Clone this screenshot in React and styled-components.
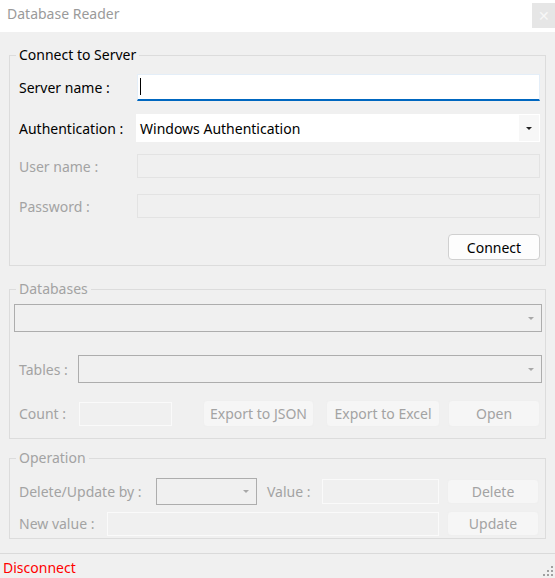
import React from 'react';
import styled, { createGlobalStyle } from 'styled-components';

const GlobalStyle = createGlobalStyle`
  html, body {
    margin: 0;
    padding: 0;
    background: #f0f0f0;
    font-family: 'Noto Sans', 'Open Sans', sans-serif;
    font-size: 14px;
    overflow: hidden;
  }
`;

const Window = styled.div`
  width: 555px;
  height: 578px;
  display: flex;
  flex-direction: column;
  background: #f0f0f0;
`;

const TitleBar = styled.div`
  height: 32px;
  background: #ffffff;
  display: flex;
  align-items: flex-start;
  justify-content: space-between;
  flex-shrink: 0;
`;

const Title = styled.div`
  color: #9a9a9a;
  font-size: 14px;
  line-height: 28px;
  padding-left: 7px;
`;

const CloseBox = styled.div`
  margin-top: 3px;
  width: 23px;
  height: 25px;
  background: #e6e6e6;
  color: #f7f7f7;
  font-size: 14px;
  display: flex;
  align-items: center;
  justify-content: center;
`;

const Group = styled.fieldset`
  margin: ${p => p.$top}px 9px 0 9px;
  padding: 0 0 ${p => p.$bottom}px 0;
  border: 1px solid #dcdcdc;
  min-width: 0;
`;

const Legend = styled.legend`
  margin-left: 6px;
  padding: 0 3px;
  line-height: 20px;
  color: ${p => (p.$disabled ? '#a3a3a3' : '#000')};
`;

const Row = styled.div`
  display: flex;
  align-items: center;
  height: ${p => p.$h}px;
  margin-top: ${p => p.$top}px;
  padding: 0 ${p => p.$pr ?? 5}px 0 ${p => p.$pl ?? 9}px;
`;

const Label = styled.div`
  width: ${p => p.$w}px;
  flex-shrink: 0;
  white-space: nowrap;
  color: ${p => (p.$disabled ? '#a3a3a3' : '#000')};
`;

const TextBox = styled.div`
  box-sizing: border-box;
  height: 100%;
  flex: ${p => (p.$w ? 'none' : '1')};
  width: ${p => (p.$w ? `${p.$w}px` : 'auto')};
  background: ${p => (p.$active ? '#fff' : '#f0f0f0')};
  border: 1px solid ${p => p.$border || '#e6e6e6'};
  display: flex;
  align-items: center;
  padding-left: 2px;
`;

const ActiveBox = styled(TextBox)`
  border-color: #e4eef8;
  border-bottom: 2px solid #0067c0;
`;

const Caret = styled.span`
  width: 1px;
  height: 17px;
  background: #000;
  margin-bottom: 2px;
`;

const Combo = styled.div`
  box-sizing: border-box;
  height: 100%;
  flex: ${p => (p.$w ? 'none' : '1')};
  width: ${p => (p.$w ? `${p.$w}px` : 'auto')};
  display: flex;
  align-items: center;
  background: ${p => (p.$active ? '#fff' : '#f0f0f0')};
  border: 1px solid ${p => (p.$active ? '#fff' : '#adadad')};
`;

const ComboText = styled.div`
  flex: 1;
  padding-left: 3px;
  color: #000;
`;

const ArrowBox = styled.div`
  width: 20px;
  height: 100%;
  display: flex;
  align-items: center;
  justify-content: center;
  background: ${p => (p.$active ? '#f7f7f7' : 'transparent')};
  &::after {
    content: '';
    border-left: 3px solid transparent;
    border-right: 3px solid transparent;
    border-top: 3px solid ${p => (p.$active ? '#222' : '#a8a8a8')};
  }
`;

const Button = styled.div`
  box-sizing: border-box;
  height: 100%;
  width: ${p => p.$w}px;
  flex-shrink: 0;
  margin-left: ${p => p.$ml || 0}px;
  border-radius: 4px;
  display: flex;
  align-items: center;
  justify-content: center;
  white-space: nowrap;
  background: ${p => (p.$disabled ? '#f6f6f6' : '#fdfdfd')};
  border: 1px solid ${p => (p.$disabled ? '#efefef' : '#d0d0d0')};
  color: ${p => (p.$disabled ? '#a3a3a3' : '#000')};
`;

const Spacer = styled.div`
  flex: 1;
`;

const Separator = styled.div`
  margin-top: 14px;
  height: 1px;
  background: #dadada;
`;

const StatusBar = styled.div`
  flex: 1;
  display: flex;
  align-items: center;
  justify-content: space-between;
  padding-left: 3px;
`;

const StatusText = styled.div`
  color: #ff0000;
  margin-top: 2px;
`;

const Grip = styled.svg`
  align-self: flex-end;
  margin: 0 1px 1px 0;
`;

export default function App() {
  return (
    <Window>
      <GlobalStyle />
      <TitleBar>
        <Title>Database Reader</Title>
        <CloseBox>✕</CloseBox>
      </TitleBar>

      <Group $top={13} $bottom={5}>
        <Legend>Connect to Server</Legend>
        <Row $h={27} $top={9}>
          <Label $w={118}>Server name :</Label>
          <ActiveBox $active>
            <Caret />
          </ActiveBox>
        </Row>
        <Row $h={28} $top={13}>
          <Label $w={117}>Authentication :</Label>
          <Combo $active>
            <ComboText>Windows Authentication</ComboText>
            <ArrowBox $active />
          </Combo>
        </Row>
        <Row $h={24} $top={12}>
          <Label $w={118} $disabled>User name :</Label>
          <TextBox $border="#e3e3e3" />
        </Row>
        <Row $h={24} $top={16}>
          <Label $w={118} $disabled>Password :</Label>
          <TextBox $border="#e3e3e3" />
        </Row>
        <Row $h={26} $top={16}>
          <Spacer />
          <Button $w={92}>Connect</Button>
        </Row>
      </Group>

      <Group $top={13} $bottom={11}>
        <Legend $disabled>Databases</Legend>
        <Row $h={28} $top={5} $pl={4} $pr={3}>
          <Combo>
            <Spacer />
            <ArrowBox />
          </Combo>
        </Row>
        <Row $h={28} $top={23} $pr={3}>
          <Label $w={59} $disabled>Tables :</Label>
          <Combo>
            <Spacer />
            <ArrowBox />
          </Combo>
        </Row>
        <Row $h={27} $top={17}>
          <Label $w={60} $disabled>Count :</Label>
          <TextBox $w={93} $border="#fafafa" style={{ height: 24 }} />
          <Button $w={111} $ml={31} $disabled>Export to JSON</Button>
          <Button $w={114} $ml={12} $disabled>Export to Excel</Button>
          <Button $w={92} $ml={8} $disabled>Open</Button>
        </Row>
      </Group>

      <Group $top={9} $bottom={2}>
        <Legend $disabled>Operation</Legend>
        <Row $h={27} $top={10} $pr={6}>
          <Label $w={137} $disabled>Delete/Update by :</Label>
          <Combo $w={101}>
            <Spacer />
            <ArrowBox />
          </Combo>
          <Label $w={55} $disabled style={{ marginLeft: 10 }}>Value :</Label>
          <TextBox $w={117} $border="#fafafa" style={{ height: 25 }} />
          <Button $w={92} $ml={8} $disabled style={{ height: 25 }}>Delete</Button>
        </Row>
        <Row $h={25} $top={6} $pr={6}>
          <Label $w={88} $disabled>New value :</Label>
          <TextBox $border="#fafafa" style={{ height: 24 }} />
          <Button $w={92} $ml={8} $disabled>Update</Button>
        </Row>
      </Group>

      <Separator />
      <StatusBar>
        <StatusText>Disconnect</StatusText>
        <Grip width="12" height="12" viewBox="0 0 12 12">
          <rect x="9" y="1" width="2" height="2" fill="#a0a0a0" />
          <rect x="5" y="5" width="2" height="2" fill="#a0a0a0" />
          <rect x="9" y="5" width="2" height="2" fill="#a0a0a0" />
          <rect x="1" y="9" width="2" height="2" fill="#a0a0a0" />
          <rect x="5" y="9" width="2" height="2" fill="#a0a0a0" />
          <rect x="9" y="9" width="2" height="2" fill="#a0a0a0" />
        </Grip>
      </StatusBar>
    </Window>
  );
}
